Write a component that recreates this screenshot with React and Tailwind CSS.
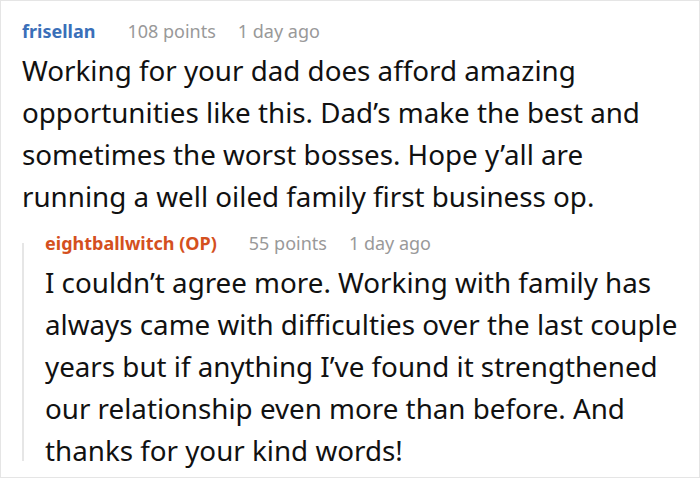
export default function App() {
  return (
    <div className="w-[700px] h-[478px] bg-white border border-[#e5e5e5] overflow-hidden" style={{ fontFamily: '"Noto Sans", "Open Sans", sans-serif' }}>
      <div className="pl-[21px] pr-[10px] pt-[18px]">
        <div className="flex items-center text-[18px] leading-[24px]">
          <span className="font-bold text-[#3a6fb9] mr-[32px]">frisellan</span>
          <span className="text-[#999999] mr-[22px]">108 points</span>
          <span className="text-[#999999]">1 day ago</span>
        </div>
        <p className="text-[27.75px] leading-[42px] text-[#111111] mt-[6px]">
          Working for your dad does afford amazing opportunities like this. Dad’s make the best and sometimes the worst bosses. Hope y’all are running a well oiled family first business op.
        </p>
        <div className="mt-[14px] flex">
          <div className="w-[2px] shrink-0 bg-[#e6e6e6] mt-[12px] mb-[10px]" />
          <div className="pl-[21px] min-w-0">
            <div className="flex items-center text-[18px] leading-[24px]">
              <span className="font-bold text-[#d4501e] mr-[32px]">eightballwitch (OP)</span>
              <span className="text-[#999999] mr-[22px]">55 points</span>
              <span className="text-[#999999]">1 day ago</span>
            </div>
            <p className="text-[27.75px] leading-[42px] text-[#111111] mt-[6px]">
              I couldn’t agree more. Working with family has always came with difficulties over the last couple years but if anything I’ve found it strengthened our relationship even more than before. And thanks for your kind words!
            </p>
          </div>
        </div>
      </div>
    </div>
  );
}
